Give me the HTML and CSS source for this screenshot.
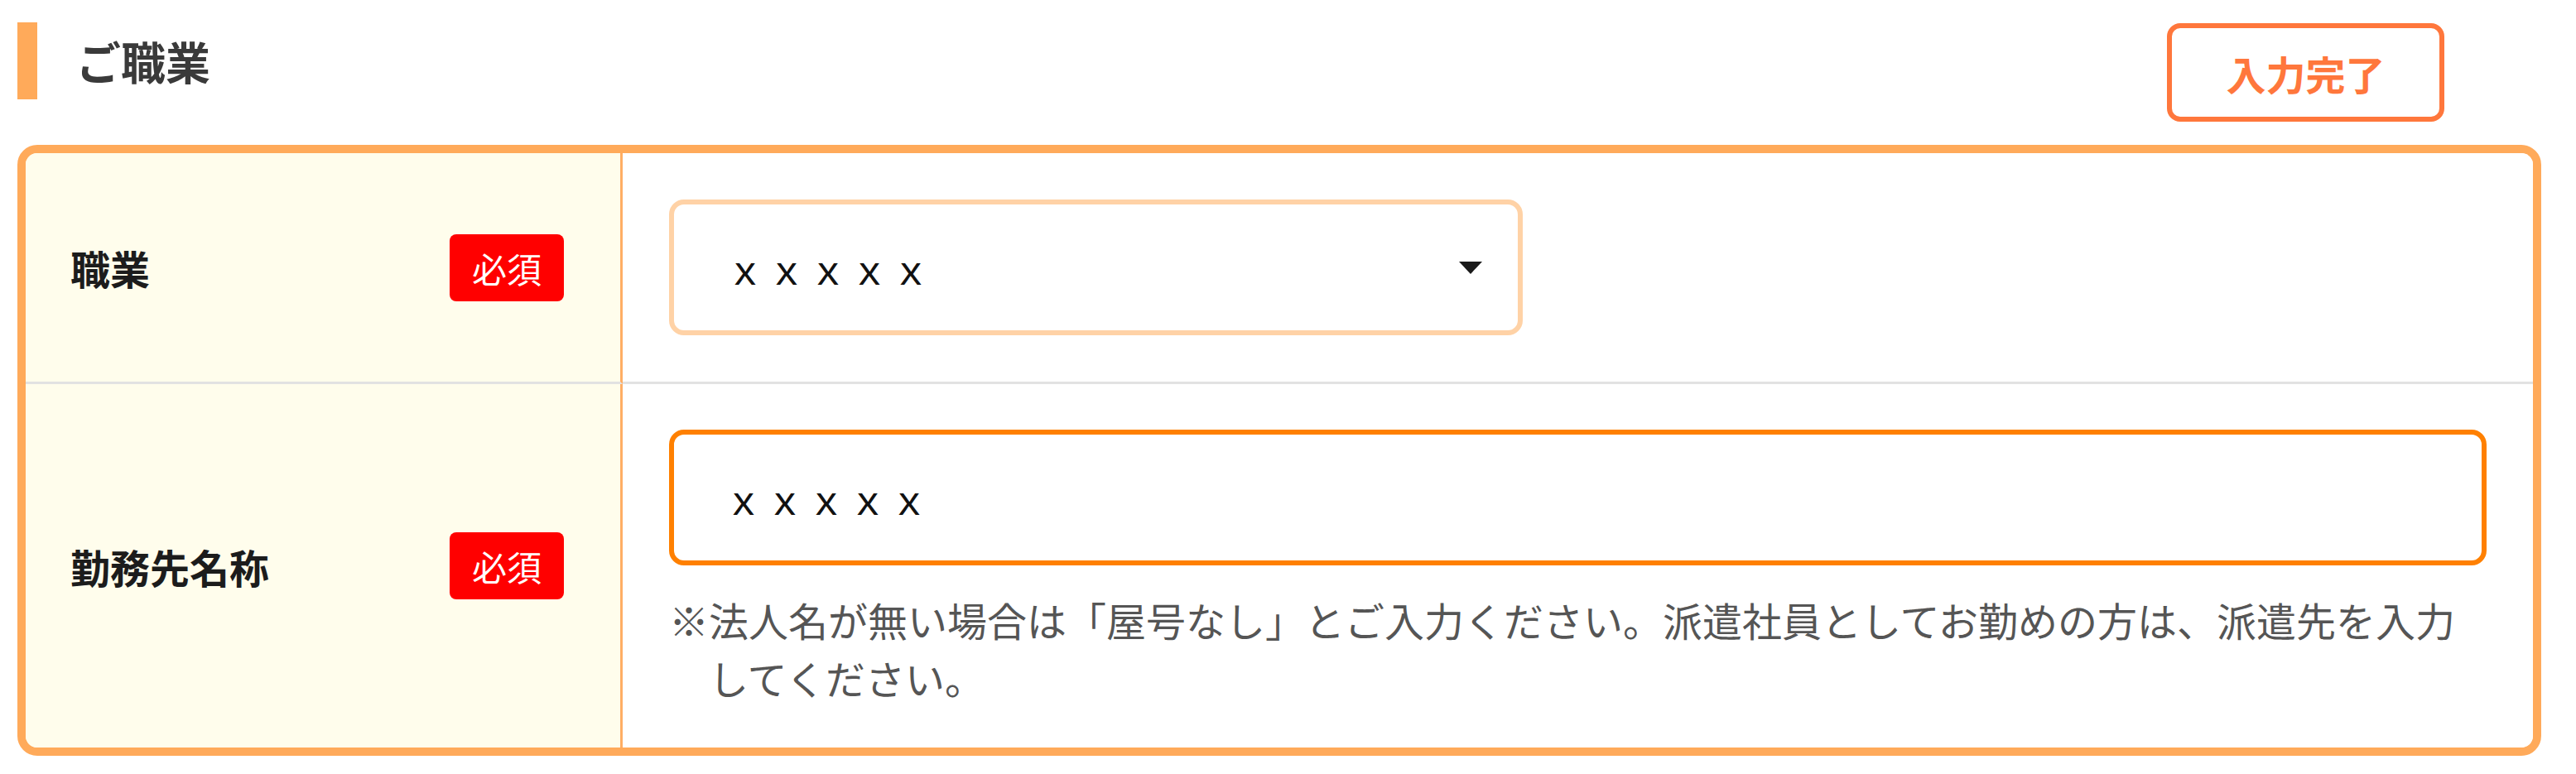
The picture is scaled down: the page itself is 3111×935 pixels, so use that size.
FILE: index.html
```html
<!DOCTYPE html>
<html lang="ja">
<head>
<meta charset="utf-8">
<title>ご職業</title>
<link rel="stylesheet" href="styles.css">
</head>
<body>
<div class="page">
  <div class="section-head">
    <div class="title">
      <span class="title-bar"></span>
      <h2 class="title-text">ご職業</h2>
    </div>
    <button class="done-btn" type="button">入力完了</button>
  </div>
  <div class="form-box">
    <div class="row row-first">
      <div class="label-cell">
        <span class="label">職業</span>
        <span class="badge">必須</span>
      </div>
      <div class="field-cell">
        <div class="select">
          <span class="select-value">ｘｘｘｘｘ</span>
          <span class="select-arrow"></span>
        </div>
      </div>
    </div>
    <div class="row">
      <div class="label-cell">
        <span class="label">勤務先名称</span>
        <span class="badge">必須</span>
      </div>
      <div class="field-cell field-cell-note">
        <div class="input"><span class="input-value">ｘｘｘｘｘ</span></div>
        <p class="note">※法人名が無い場合は「屋号なし」とご入力ください。派遣社員としてお勤めの方は、派遣先を入力してください。</p>
      </div>
    </div>
  </div>
</div>
</body>
</html>
```

FILE: styles.css
```css
* {
  box-sizing: border-box;
}

html, body {
  margin: 0;
  padding: 0;
  background: #ffffff;
}

body {
  font-family: "Noto Sans CJK JP", "Noto Sans", sans-serif;
  color: #222222;
}

.page {
  width: 3111px;
  padding: 27px 42px 0 21px;
}

.section-head {
  display: flex;
  justify-content: space-between;
  align-items: flex-start;
  height: 148px;
}

.title {
  display: flex;
  align-items: center;
  gap: 47px;
}

.title-bar {
  display: block;
  width: 24px;
  height: 93px;
  background: #ffaa5a;
}

.title-text {
  margin: 0;
  font-size: 54px;
  font-weight: 700;
  line-height: 1;
  color: #3a3a3a;
}

.done-btn {
  width: 335px;
  height: 119px;
  margin: 1px 117px 0 0;
  border: 6px solid #ff773c;
  border-radius: 16px;
  background: #ffffff;
  color: #ff773c;
  font-family: "Noto Sans CJK JP", "Noto Sans", sans-serif;
  font-size: 48px;
  font-weight: 700;
  padding: 0;
  line-height: 1;
}

.form-box {
  border: 10px solid #ffaa5a;
  border-radius: 24px;
  overflow: hidden;
}

.row {
  display: grid;
  grid-template-columns: 721px 1fr;
}

.row-first .label-cell,
.row-first .field-cell {
  border-bottom: 3px solid #e2e2e2;
}

.label-cell {
  display: flex;
  align-items: center;
  justify-content: space-between;
  padding: 0 68px 0 54px;
  background: #fffdec;
  border-right: 3px solid #ffae64;
}

.label {
  font-size: 48px;
  font-weight: 700;
  color: #1c1c1c;
  line-height: 1;
}

.badge {
  display: block;
  height: 81px;
  padding: 0 27px;
  background: #ff0000;
  border-radius: 8px;
  color: #ffffff;
  font-size: 42px;
  line-height: 81px;
}

.field-cell {
  padding: 56px 56px;
  background: #ffffff;
}

.field-cell-note {
  padding: 55px 56px 50px;
}

.select {
  display: flex;
  align-items: center;
  justify-content: space-between;
  width: 1031px;
  height: 164px;
  border: 6px solid #ffd2a6;
  border-radius: 18px;
  padding: 0 43px 0 62px;
  background: #ffffff;
}

.select-value,
.input-value {
  font-size: 48px;
  letter-spacing: 2px;
  color: #111111;
  line-height: 1;
}

.select-arrow {
  width: 0;
  height: 0;
  border-left: 14px solid transparent;
  border-right: 14px solid transparent;
  border-top: 15px solid #1a1a1a;
}

.input {
  display: flex;
  align-items: center;
  height: 164px;
  border: 6px solid #ff8000;
  border-radius: 18px;
  padding: 0 0 0 60px;
  background: #ffffff;
}

.note {
  margin: 30px 0 0;
  padding-left: 1em;
  text-indent: -1em;
  font-size: 48px;
  line-height: 70px;
  color: #555555;
}
```
